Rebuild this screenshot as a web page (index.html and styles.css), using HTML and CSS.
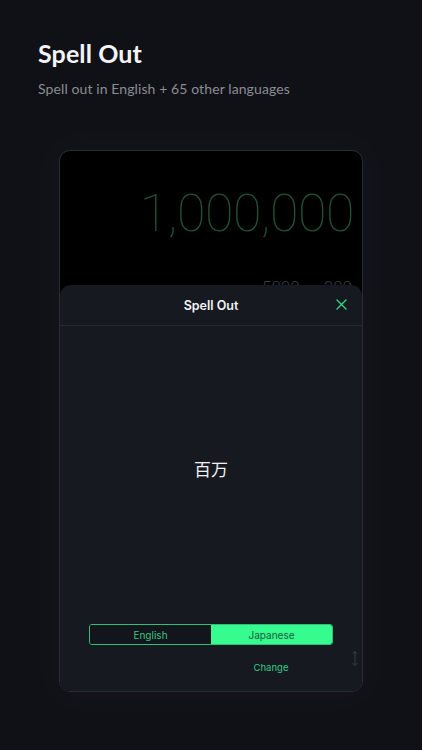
FILE: index.html
```html
<!DOCTYPE html>
<html>
<head>
<meta charset="utf-8">
<link rel="stylesheet" href="styles.css">
</head>
<body>
<header class="intro">
  <h1 class="title">Spell Out</h1>
  <p class="subtitle">Spell out in English + 65 other languages</p>
</header>
<div class="stage">
  <div class="device">
    <div class="display">
      <div class="number">1,000,000</div>
      <div class="history"><span>5000</span><span>200</span></div>
    </div>
    <div class="sheet">
      <div class="sheet-head">
        <span class="sheet-title">Spell Out</span>
        <svg class="close" width="11" height="11" viewBox="0 0 11 11"><path d="M1 1L10 10M10 1L1 10" stroke="#36d88a" stroke-width="1.3" fill="none" stroke-linecap="round"/></svg>
      </div>
      <div class="sheet-body">
        <div class="spelled">百万</div>
        <div class="segmented">
          <div class="seg seg-off">English</div>
          <div class="seg seg-on">Japanese</div>
        </div>
        <div class="change-row">
          <span class="change">Change</span>
          <svg class="resize" width="6" height="17" viewBox="0 0 6 17"><path d="M3 1.5V15.5M1 3.5L3 1.5L5 3.5M1 13.5L3 15.5L5 13.5" stroke="#3a3d45" stroke-width="1" fill="none" stroke-linecap="round" stroke-linejoin="round"/></svg>
        </div>
      </div>
    </div>
  </div>
</div>
</body>
</html>
```

FILE: styles.css
```css
html, body {
  margin: 0;
  padding: 0;
}
body {
  width: 422px;
  height: 750px;
  overflow: hidden;
  background: #101116;
  font-family: "Liberation Sans", Arial, sans-serif;
}
.intro {
  padding: 36px 0 0 38px;
}
.title {
  margin: 0;
  font-family: Lato, "Noto Sans", sans-serif;
  font-weight: 700;
  font-size: 25px;
  line-height: 34px;
  color: #f4f4f6;
  letter-spacing: 0.1px;
}
.subtitle {
  margin: 9px 0 0 0;
  font-family: Lato, "Noto Sans", sans-serif;
  font-weight: 400;
  font-size: 14px;
  line-height: 20px;
  color: #8b8d93;
  letter-spacing: 0.1px;
}
.stage {
  padding: 51px 0 0 59px;
}
.device {
  width: 302px;
  height: 540px;
  border: 1px solid #2a2c34;
  border-radius: 11px;
  background: #000;
  overflow: hidden;
  display: flex;
  flex-direction: column;
  box-shadow: 0 0 40px 14px rgba(255,255,255,0.018);
}
.display {
  height: 134px;
  flex: none;
  position: relative;
  overflow: hidden;
}
.number {
  text-align: right;
  padding: 31px 8px 0 0;
  font-family: Roboto, "Liberation Sans", sans-serif;
  font-weight: 100;
  font-size: 52px;
  line-height: 64px;
  color: #1f5236;
  letter-spacing: -0.5px;
}
.history {
  position: absolute;
  right: 10px;
  top: 126px;
  display: flex;
  gap: 24px;
  font-family: Roboto, "Liberation Sans", sans-serif;
  font-weight: 300;
  font-size: 17px;
  line-height: 20px;
  color: #3a3c43;
}
.sheet {
  flex: 1;
  background: #161920;
  border-radius: 11px 11px 0 0;
  display: flex;
  flex-direction: column;
  position: relative;
  z-index: 1;
}
.sheet-head {
  height: 40px;
  flex: none;
  border-bottom: 1px solid #262930;
  display: flex;
  align-items: center;
  justify-content: center;
  position: relative;
}
.sheet-title {
  font-family: Inter, "Liberation Sans", sans-serif;
  font-weight: 600;
  font-size: 12.5px;
  color: #f2f2f4;
}
.close {
  position: absolute;
  right: 15px;
  top: 14px;
}
.sheet-body {
  flex: 1;
  display: flex;
  flex-direction: column;
  align-items: center;
}
.spelled {
  margin-top: 131px;
  font-family: "Noto Sans CJK JP", "Noto Sans CJK SC", sans-serif;
  font-size: 17px;
  line-height: 24px;
  color: #f0f0f2;
}
.segmented {
  margin-top: 143px;
  width: 244px;
  height: 21px;
  display: flex;
  border: 1px solid #2fbf78;
  border-radius: 3px;
  box-sizing: border-box;
  overflow: hidden;
}
.seg {
  flex: 1;
  display: flex;
  align-items: center;
  justify-content: center;
  font-family: Inter, "Liberation Sans", sans-serif;
  font-size: 10px;
}
.seg-off {
  color: #36c983;
  background: #12151b;
}
.seg-on {
  color: #1f5a3c;
  background: #36fb8e;
}
.change-row {
  width: 100%;
  position: relative;
  display: flex;
  justify-content: center;
  margin-top: 16px;
}
.change {
  margin-left: 120px;
  font-family: Inter, "Liberation Sans", sans-serif;
  font-size: 9.5px;
  line-height: 14px;
  color: #37c985;
}
.resize {
  position: absolute;
  right: 4px;
  top: -11px;
}
```
